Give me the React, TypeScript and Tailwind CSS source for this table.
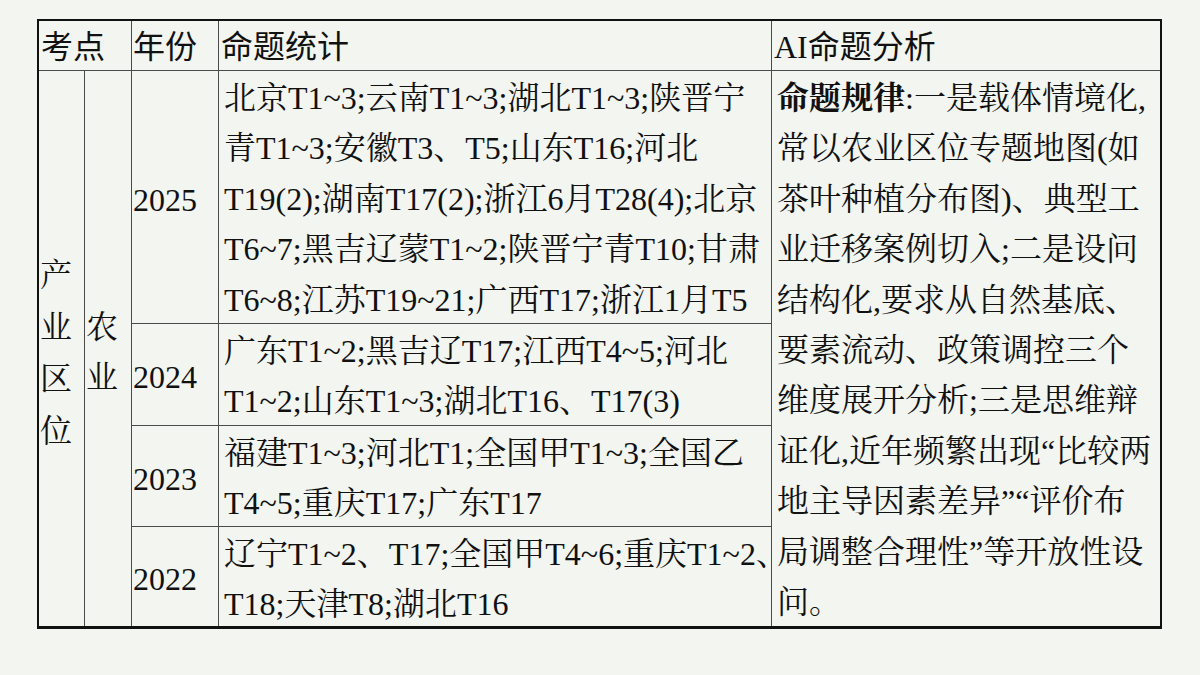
import React from "react";

const font = {
  fontFamily: '"Liberation Serif", "Noto Serif CJK SC", "Noto Sans CJK SC", serif',
};

const y2025 = [
  "北京T1~3;云南T1~3;湖北T1~3;陕晋宁",
  "青T1~3;安徽T3、T5;山东T16;河北",
  "T19(2);湖南T17(2);浙江6月T28(4);北京",
  "T6~7;黑吉辽蒙T1~2;陕晋宁青T10;甘肃",
  "T6~8;江苏T19~21;广西T17;浙江1月T5",
];
const y2024 = ["广东T1~2;黑吉辽T17;江西T4~5;河北", "T1~2;山东T1~3;湖北T16、T17(3)"];
const y2023 = ["福建T1~3;河北T1;全国甲T1~3;全国乙", "T4~5;重庆T17;广东T17"];
const y2022 = ["辽宁T1~2、T17;全国甲T4~6;重庆T1~2、", "T18;天津T8;湖北T16"];

const analysis = [
  "常以农业区位专题地图(如",
  "茶叶种植分布图)、典型工",
  "业迁移案例切入;二是设问",
  "结构化,要求从自然基底、",
  "要素流动、政策调控三个",
  "维度展开分析;三是思维辩",
  "证化,近年频繁出现“比较两",
  "地主导因素差异”“评价布",
  "局调整合理性”等开放性设",
  "问。",
];

const headFont = { fontFamily: '"Liberation Serif", "Noto Sans CJK SC", sans-serif' };

function Lines({ lines }: { lines: string[] }) {
  return (
    <div className="pl-[5px] pt-[2px] text-[32px] leading-[50.4px] whitespace-nowrap">
      {lines.map((l, i) => (
        <div key={i}>{l}</div>
      ))}
    </div>
  );
}

function Year({ y }: { y: string }) {
  return (
    <div className="bg-[#f2f5f0] flex items-center pl-[1px] pt-[5px] text-[32px] leading-none">{y}</div>
  );
}

export default function App() {
  return (
    <div className="w-[1200px] h-[675px] bg-[#f2f5f0] text-[#111] overflow-hidden pt-[19px] pl-[37px]" style={font}>
      <div className="inline-block border-t-2 border-l-2 border-r-2 border-b-[3px] border-[#111]">
        <div className="grid grid-cols-[45px_46px_86px_552px_388px] grid-rows-[49px_252px_101px_100px_99px] gap-px bg-[#4a4a4a]">
          {/* header */}
          <div className="col-span-2 bg-[#f2f5f0] flex items-center pl-[2px] pt-[2px] text-[32px] leading-none" style={headFont}>考点</div>
          <div className="bg-[#f2f5f0] flex items-center pl-[1px] pt-[2px] text-[32px] leading-none" style={headFont}>年份</div>
          <div className="bg-[#f2f5f0] flex items-center pl-[2px] pt-[2px] text-[32px] leading-none" style={headFont}>命题统计</div>
          <div className="bg-[#f2f5f0] flex items-center pl-[2px] pt-[2px] text-[32px] leading-none" style={headFont}>AI命题分析</div>

          {/* left spans */}
          <div className="row-span-4 bg-[#f2f5f0] flex items-center pl-[1px]">
            <div className="text-[32px] leading-[52px] w-[34px] pt-[9px]">产业区位</div>
          </div>
          <div className="row-span-4 bg-[#f2f5f0] flex items-center pl-[1px]">
            <div className="text-[32px] leading-[50px] w-[34px] pt-[6px]">农业</div>
          </div>

          {/* 2025 */}
          <Year y="2025" />
          <div className="bg-[#f2f5f0]">
            <Lines lines={y2025} />
          </div>
          <div className="row-span-4 bg-[#f2f5f0]">
            <div className="pl-[5px] pt-[2px] text-[32px] leading-[50.4px] whitespace-nowrap">
              <div>
                <span className="font-bold">命题规律</span>:一是载体情境化,
              </div>
              {analysis.map((l, i) => (
                <div key={i}>{l}</div>
              ))}
            </div>
          </div>

          {/* 2024 */}
          <Year y="2024" />
          <div className="bg-[#f2f5f0]">
            <Lines lines={y2024} />
          </div>

          {/* 2023 */}
          <Year y="2023" />
          <div className="bg-[#f2f5f0]">
            <Lines lines={y2023} />
          </div>

          {/* 2022 */}
          <Year y="2022" />
          <div className="bg-[#f2f5f0]">
            <Lines lines={y2022} />
          </div>
        </div>
      </div>
    </div>
  );
}
